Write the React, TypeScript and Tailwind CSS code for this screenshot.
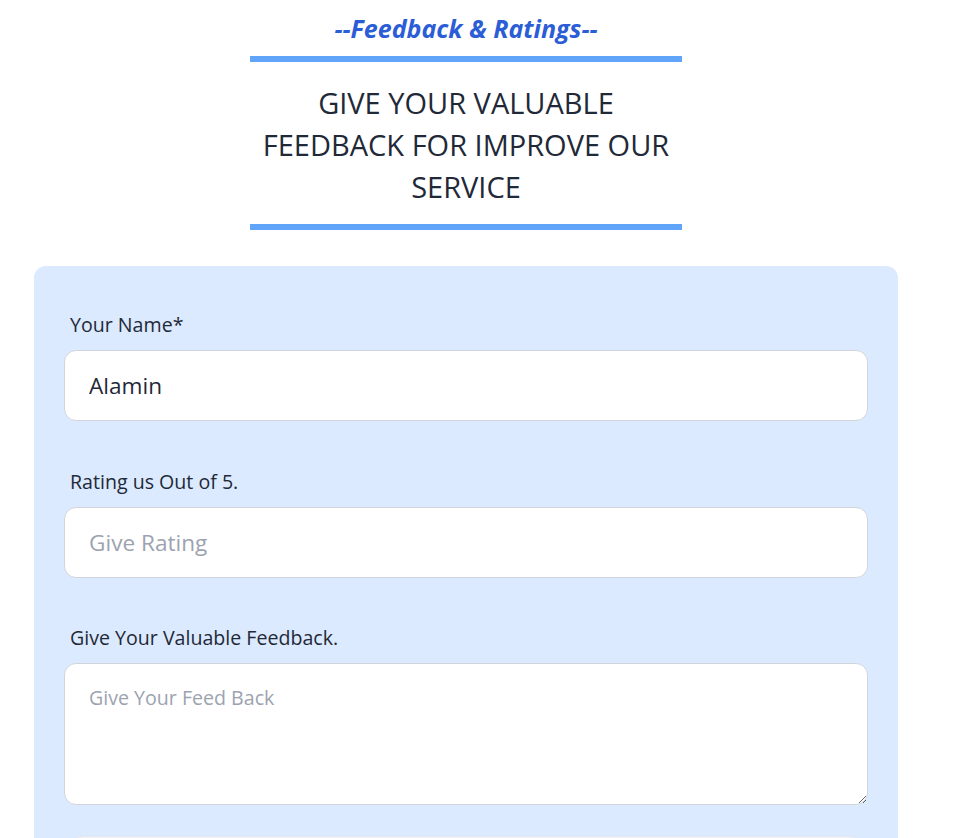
import React from "react";

export default function App() {
  const font = { fontFamily: '"Open Sans", "Noto Sans", sans-serif' };
  return (
    <div className="min-h-screen bg-white text-[#1f2937]" style={font}>
      <div className="w-[932px]">
        <h2 className="pt-[12px] text-center text-[25px] font-bold italic leading-[32px] text-[#2b5dd6]">
          --Feedback &amp; Ratings--
        </h2>
        <div className="mx-auto mt-[12px] w-[432px]">
          <div className="h-[6px] bg-[#60a5fa]" />
          <p className="pb-[16px] pt-[20px] text-center text-[29px] font-normal leading-[42px] text-[#1f2937]">
            GIVE YOUR VALUABLE FEEDBACK FOR IMPROVE OUR SERVICE
          </p>
          <div className="h-[6px] bg-[#60a5fa]" />
        </div>
        <div className="mx-auto mt-[36px] w-[864px] rounded-xl bg-[#dbeafe] px-[30px] pb-10 pt-[45px]">
          <div>
            <label className="block pb-[11px] pl-[6px] text-[19.6px] leading-7 text-[#1f2937]">Your Name*</label>
            <input
              className="block h-[71px] w-full rounded-xl border border-[#d1d5db] bg-white px-6 text-[22.6px] text-[#1f2937] outline-none placeholder:text-[#9ca3af]"
              defaultValue="Alamin"
            />
          </div>
          <div className="mt-[47px]">
            <label className="block pb-[11px] pl-[6px] text-[19.6px] leading-7 text-[#1f2937]">Rating us Out of 5.</label>
            <input
              className="block h-[71px] w-full rounded-xl border border-[#d1d5db] bg-white px-6 text-[22.6px] text-[#1f2937] outline-none placeholder:text-[#9ca3af]"
              placeholder="Give Rating"
            />
          </div>
          <div className="mt-[46px]">
            <label className="block pb-[11px] pl-[6px] text-[19.6px] leading-7 text-[#1f2937]">Give Your Valuable Feedback.</label>
            <textarea
              className="block h-[142px] w-full rounded-xl border border-[#d1d5db] bg-white px-6 pb-[20px] pt-[20px] text-[19.6px] leading-7 text-[#1f2937] outline-none placeholder:text-[#9ca3af]"
              placeholder="Give Your Feed Back"
            />
          </div>
          <div className="mt-[31px] px-[6px]">
            <div className="h-[56px] w-full rounded-xl border border-[#e5e7eb] bg-[#eef2fa]" />
          </div>
        </div>
      </div>
    </div>
  );
}
